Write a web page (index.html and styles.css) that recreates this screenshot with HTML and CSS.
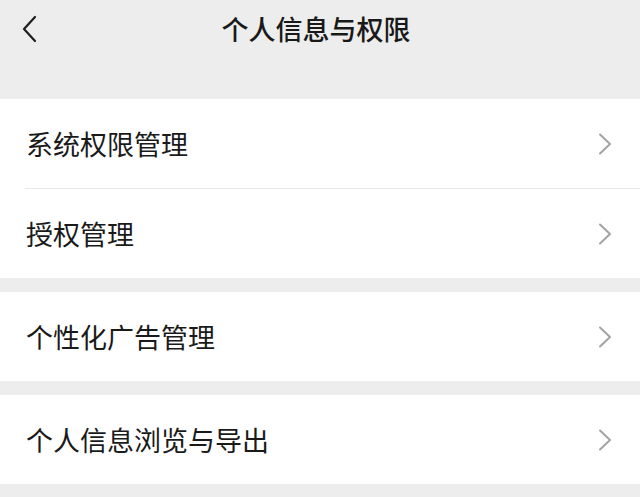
FILE: index.html
```html
<!DOCTYPE html>
<html lang="zh-CN">
<head>
<meta charset="utf-8">
<title>个人信息与权限</title>
<link rel="stylesheet" href="styles.css">
</head>
<body>
<header class="nav">
  <span class="back">
    <svg width="16" height="28" viewBox="0 0 16 28"><path d="M13 2 L2 14 L13 26" fill="none" stroke="#1e1e1e" stroke-width="2.2" stroke-linecap="round" stroke-linejoin="round"/></svg>
  </span>
  <h1 class="title">个人信息与权限</h1>
  <span class="spacer"></span>
</header>
<main class="content">
  <section class="group">
    <div class="row"><span class="label">系统权限管理</span><svg class="chev" width="14" height="22" viewBox="0 0 14 22"><path d="M2 1.5 L12 11 L2 20.5" fill="none" stroke="#a3a3a3" stroke-width="2" stroke-linecap="round" stroke-linejoin="round"/></svg></div>
    <div class="divider"></div>
    <div class="row"><span class="label">授权管理</span><svg class="chev" width="14" height="22" viewBox="0 0 14 22"><path d="M2 1.5 L12 11 L2 20.5" fill="none" stroke="#a3a3a3" stroke-width="2" stroke-linecap="round" stroke-linejoin="round"/></svg></div>
  </section>
  <section class="group">
    <div class="row"><span class="label">个性化广告管理</span><svg class="chev" width="14" height="22" viewBox="0 0 14 22"><path d="M2 1.5 L12 11 L2 20.5" fill="none" stroke="#a3a3a3" stroke-width="2" stroke-linecap="round" stroke-linejoin="round"/></svg></div>
  </section>
  <section class="group">
    <div class="row"><span class="label">个人信息浏览与导出</span><svg class="chev" width="14" height="22" viewBox="0 0 14 22"><path d="M2 1.5 L12 11 L2 20.5" fill="none" stroke="#a3a3a3" stroke-width="2" stroke-linecap="round" stroke-linejoin="round"/></svg></div>
  </section>
</main>
</body>
</html>
```

FILE: styles.css
```css
html, body {
  margin: 0;
  padding: 0;
}
body {
  background: #ededed;
  font-family: "Noto Sans CJK SC", "Noto Sans", sans-serif;
  color: #191919;
  width: 640px;
  height: 497px;
  overflow: hidden;
}
.nav {
  height: 99px;
  display: flex;
  align-items: flex-start;
  padding: 0 22px;
  box-sizing: border-box;
}
.back {
  width: 40px;
  height: 58px;
  display: flex;
  align-items: center;
}
.title {
  flex: 1;
  margin: 0;
  text-align: center;
  font-size: 27px;
  font-weight: 500;
  line-height: 58px;
  color: #191919;
}
.spacer {
  width: 48px;
}
.content {
  display: flex;
  flex-direction: column;
  gap: 14px;
}
.group {
  background: #fff;
  display: flex;
  flex-direction: column;
}
.row {
  height: 89px;
  display: flex;
  align-items: center;
  justify-content: space-between;
  padding: 0 28px 0 26px;
}
.label {
  font-size: 27px;
  line-height: 1;
  color: #1a1a1a;
}
.chev {
  display: block;
}
.divider {
  height: 1px;
  margin-left: 25px;
  background: #e9e9e9;
}
```
